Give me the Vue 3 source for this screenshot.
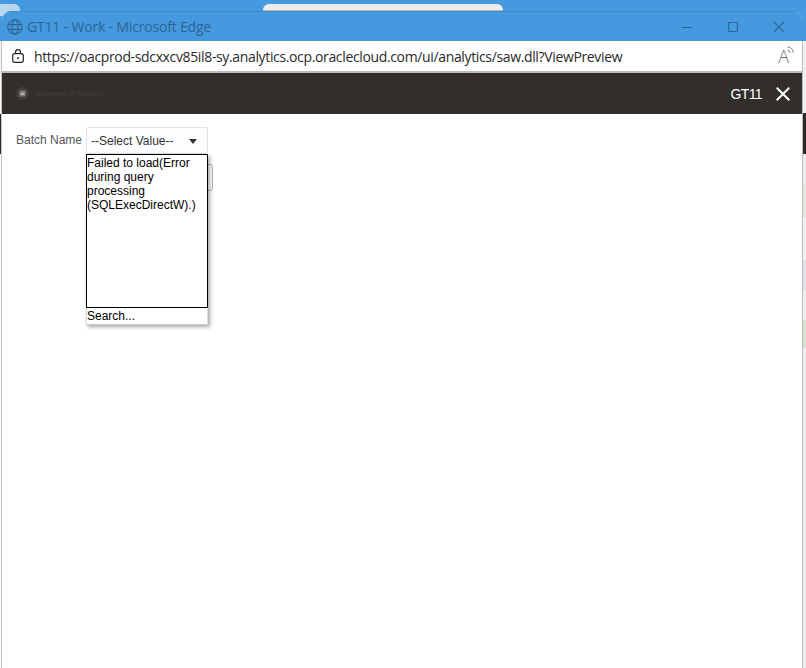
<script setup>
const strips = [
  { h: 72, c: '#f1f1f1' }, { h: 41, c: '#2f2b29' }, { h: 30, c: '#ececec' }, { h: 33, c: '#e6e4e1' }, { h: 43, c: '#f0f0f0' },
  { h: 31, c: '#dfe1e5' }, { h: 29, c: '#efefef' }, { h: 28, c: '#d5e2cf' }, { h: 320, c: '#ececec' }
]
</script>

<template>
  <div class="desk">
    <div class="behind-left"></div>
    <div class="behind-tab"></div>
    <div class="side-left"></div>
    <div class="side-right">
      <div v-for="(s, i) in strips" :key="i" class="seg" :style="{ height: s.h + 'px', background: s.c }"></div>
    </div>

    <section class="win">
      <header class="titlebar">
        <svg class="globe" width="16" height="16" viewBox="0 0 16 16" fill="none" stroke="#2d6595" stroke-width="1.1">
          <circle cx="8" cy="8" r="7.2" />
          <ellipse cx="8" cy="8" rx="3.2" ry="7.2" />
          <path d="M1.2 5.6h13.6M1.2 10.4h13.6" />
        </svg>
        <span class="wintitle">GT11 - Work - Microsoft Edge</span>
        <div class="winbtns">
          <svg width="12" height="12" viewBox="0 0 12 12"><path d="M1 6.5h10" stroke="#2d6595" stroke-width="1.2" fill="none" /></svg>
          <svg width="12" height="12" viewBox="0 0 12 12"><rect x="1.5" y="1.5" width="9" height="9" rx="1" stroke="#2d6595" stroke-width="1.2" fill="none" /></svg>
          <svg width="12" height="12" viewBox="0 0 12 12"><path d="M1 1l10 10M11 1L1 11" stroke="#2d6595" stroke-width="1.1" fill="none" /></svg>
        </div>
      </header>

      <div class="addr">
        <svg class="lock" width="12" height="14" viewBox="0 0 12 14" fill="none" stroke="#222" stroke-width="1.2">
          <rect x="0.7" y="4.6" width="10.6" height="8.7" rx="2" />
          <path d="M3.6 4.6V3.1a2.4 2.4 0 0 1 4.8 0v1.5" />
          <circle cx="6" cy="9" r="1" fill="#222" stroke="none" />
        </svg>
        <span class="url">https://oacprod-sdcxxcv85il8-sy.analytics.ocp.oraclecloud.com/ui/analytics/saw.dll?ViewPreview</span>
        <span class="readaloud">
          <span class="bigA">A</span>
          <svg class="waves" width="7" height="9" viewBox="0 0 7 9" fill="none" stroke="#777" stroke-width="1">
            <path d="M.5 4.2a2.6 2.6 0 0 1 2.6 2.6M.5 1A5.8 5.8 0 0 1 6.3 6.8" />
          </svg>
        </span>
      </div>

      <div class="dark">
        <div class="brand">
          <svg width="13" height="13" viewBox="0 0 13 13" class="crest">
            <circle cx="6.5" cy="6.5" r="6.5" fill="#413e3c" />
            <path d="M3.5 3.5h6v6h-6z" fill="#7d7a78" />
            <path d="M4.5 6h4v1.5h-4z" fill="#c4c2c1" />
          </svg>
          <span class="dept">Department of Transport</span>
        </div>
        <div class="dialog-title">
          <span>GT11</span>
          <svg width="14" height="14" viewBox="0 0 14 14"><path d="M.7.7l12.6 12.6M13.3.7L.7 13.3" stroke="#fff" stroke-width="2" fill="none" /></svg>
        </div>
      </div>

      <main class="content">
        <label class="lbl">Batch Name</label>
        <div class="picker">
          <div class="selectbox">
            <span>--Select Value--</span>
            <i class="caret"></i>
          </div>
          <div class="behind-btn"></div>
          <div class="panel">
            <div class="results">Failed to load(Error during query processing (SQLExecDirectW).)</div>
            <div class="search">Search...</div>
          </div>
        </div>
      </main>
    </section>
  </div>
</template>

<style>
html, body { margin: 0; padding: 0; background: #4599de; }
</style>

<style scoped>
.desk {
  position: relative;
  width: 806px;
  height: 668px;
  overflow: hidden;
  background: #4599de;
}
.behind-left {
  position: absolute;
  left: -20px;
  top: 4px;
  width: 40px;
  height: 12px;
  border-radius: 6px;
  background: #b8d6ee;
}
.behind-tab {
  position: absolute;
  left: 263px;
  top: 4px;
  width: 240px;
  height: 7px;
  box-sizing: border-box;
  border-radius: 6px 6px 0 0;
  border-bottom: 1px solid #b5b5b5;
  background: #ececec;
}
.side-left {
  position: absolute;
  left: 0;
  top: 41px;
  width: 2px;
  height: 627px;
  box-sizing: border-box;
  border-right: 1px solid #c4c4c4;
  background: linear-gradient(#f4f4f4 0 73px, #2f2b29 73px 113px, #fbfbfb 113px);
}
.side-right {
  position: absolute;
  left: 802px;
  top: 41px;
  width: 4px;
  display: flex;
  flex-direction: column;
}
.seg { border-left: 1px solid #bcbcbc; }
.win {
  position: absolute;
  left: 2px;
  top: 11px;
  width: 800px;
  height: 657px;
  display: flex;
  flex-direction: column;
  background: #fff;
  border-radius: 9px 9px 0 0;
  overflow: hidden;
}
.titlebar {
  height: 30px;
  flex: none;
  box-sizing: border-box;
  border-top: 1px solid #3f8cca;
  display: flex;
  align-items: center;
  background: #4599de;
  padding-left: 5px;
}
.globe { margin-right: 4px; }
.wintitle {
  font: 14px "Open Sans", sans-serif;
  letter-spacing: -0.18px;
  color: #2d6595;
  white-space: nowrap;
}
.winbtns {
  margin-left: auto;
  display: flex;
  gap: 34px;
  padding-right: 17px;
  align-items: center;
}
.addr {
  height: 30px;
  flex: none;
  display: flex;
  align-items: center;
  background: #fff;
  border-bottom: 2px solid #b9b9b9;
  padding-left: 10px;
  padding-right: 8px;
}
.lock { margin-right: 10px; }
.url {
  font: 14px "Open Sans", sans-serif;
  letter-spacing: -0.355px;
  color: #2b2b2b;
  white-space: nowrap;
}
.readaloud {
  margin-left: auto;
  display: flex;
  align-items: flex-start;
  color: #6a6a6a;
}
.bigA { font: 300 18px "Open Sans", sans-serif; line-height: 22px; margin-right: -2px; }
.waves { margin-top: 1px; }
.dark {
  height: 41px;
  flex: none;
  display: flex;
  align-items: center;
  justify-content: space-between;
  background: #322e2b;
  padding-left: 14px;
  padding-right: 12px;
}
.brand { display: flex; align-items: center; gap: 5px; }
.crest { filter: blur(.6px); }
.dept {
  font: 6.4px "Liberation Sans", sans-serif;
  color: #45413f;
  white-space: nowrap;
}
.dialog-title {
  display: flex;
  align-items: center;
  gap: 14px;
  font: 14px "Liberation Sans", sans-serif;
  letter-spacing: -0.6px;
  color: #fff;
}
.content {
  flex: 1;
  display: flex;
  align-items: flex-start;
  padding: 13px 0 0 14px;
  font-family: "Liberation Sans", sans-serif;
}
.lbl {
  font-size: 12px;
  color: #55565a;
  line-height: 26px;
  width: 70px;
  white-space: nowrap;
}
.picker { position: relative; width: 122px; }
.selectbox {
  box-sizing: border-box;
  height: 27px;
  display: flex;
  align-items: center;
  justify-content: space-between;
  padding: 0 10px 0 4px;
  border: 1px solid #e3e3e3;
  border-radius: 2px;
  background: #fcfdff;
  font-size: 12px;
  color: #333;
}
.caret {
  width: 0;
  height: 0;
  border-left: 4.5px solid transparent;
  border-right: 4.5px solid transparent;
  border-top: 5px solid #333;
  margin-top: 2px;
}
.behind-btn {
  position: absolute;
  left: 116px;
  top: 37px;
  width: 11px;
  height: 27px;
  box-sizing: border-box;
  border: 1px solid #b8b8b8;
  border-radius: 3px;
}
.panel {
  position: absolute;
  left: 0;
  top: 27px;
  width: 122px;
  background: #fff;
  box-shadow: 2px 2px 4px rgba(0, 0, 0, .35);
}
.results {
  box-sizing: border-box;
  height: 154px;
  border: 1px solid #000;
  padding: 1px 0 0 0;
  font-size: 12px;
  line-height: 14px;
  color: #000;
}
.search {
  height: 17px;
  font-size: 12px;
  line-height: 16px;
  color: #000;
  border-left: 1px solid #ddd;
  border-right: 1px solid #ddd;
  border-bottom: 1px solid #ccc;
  box-sizing: border-box;
}
</style>
